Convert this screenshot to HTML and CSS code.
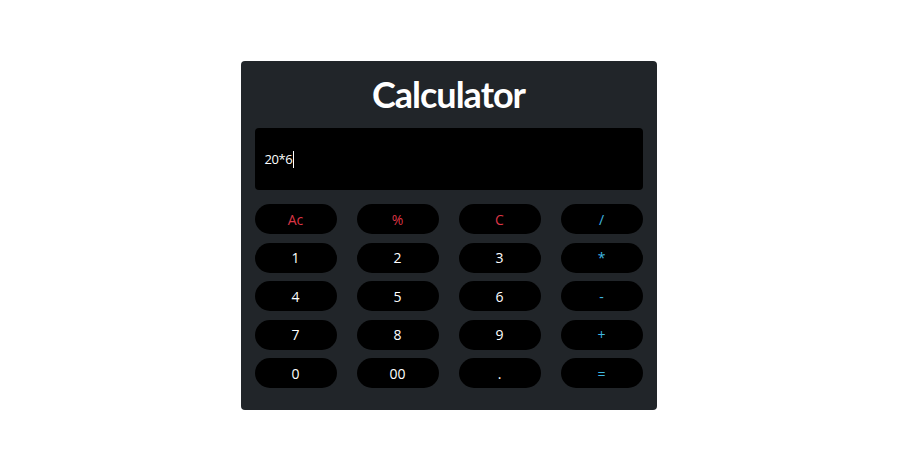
FILE: index.html
```html
<!DOCTYPE html>
<html lang="en">
<head>
<meta charset="utf-8">
<title>Calculator</title>
<link rel="stylesheet" href="styles.css">
</head>
<body>
<div class="calc">
  <h1 class="title">Calculator</h1>
  <div class="display"><span class="expr">20*6</span><span class="caret"></span></div>
  <div class="keys">
    <button class="key red">Ac</button>
    <button class="key red">%</button>
    <button class="key red">C</button>
    <button class="key blue">/</button>
    <button class="key">1</button>
    <button class="key">2</button>
    <button class="key">3</button>
    <button class="key blue">*</button>
    <button class="key">4</button>
    <button class="key">5</button>
    <button class="key">6</button>
    <button class="key blue">-</button>
    <button class="key">7</button>
    <button class="key">8</button>
    <button class="key">9</button>
    <button class="key blue">+</button>
    <button class="key">0</button>
    <button class="key">00</button>
    <button class="key">.</button>
    <button class="key blue">=</button>
  </div>
</div>
</body>
</html>
```
FILE: styles.css
```css
html, body {
  margin: 0;
  padding: 0;
  background: #ffffff;
}
body {
  font-family: "Open Sans", "Noto Sans", sans-serif;
}
.calc {
  width: 416px;
  box-sizing: border-box;
  margin: 61px auto 0;
  padding: 12px 14px 22px;
  background: #212529;
  border-radius: 4px;
}
.title {
  margin: 0 0 12px;
  font-family: "Lato", "Open Sans", sans-serif;
  font-size: 36px;
  line-height: 43px;
  font-weight: 700;
  color: #ffffff;
  text-align: center;
  letter-spacing: -1px;
}
.display {
  height: 62px;
  background: #000000;
  border-radius: 4px;
  display: flex;
  align-items: center;
  padding-left: 10px;
  color: #ffffff;
  font-size: 13px;
  letter-spacing: -0.4px;
}
.caret {
  display: inline-block;
  width: 1px;
  height: 17px;
  background: #ffffff;
  margin-left: 1px;
}
.keys {
  margin-top: 14px;
  display: grid;
  grid-template-columns: repeat(4, 82px);
  grid-auto-rows: 30px;
  column-gap: 20px;
  row-gap: 8.5px;
}
.key {
  border: none;
  background: #000000;
  color: #ffffff;
  border-radius: 15px;
  font-family: "Open Sans", "Noto Sans", sans-serif;
  font-size: 14px;
  padding: 0;
  margin: 0;
}
.key.red {
  color: #dc3545;
}
.key.blue {
  color: #3fb7e0;
}
```
